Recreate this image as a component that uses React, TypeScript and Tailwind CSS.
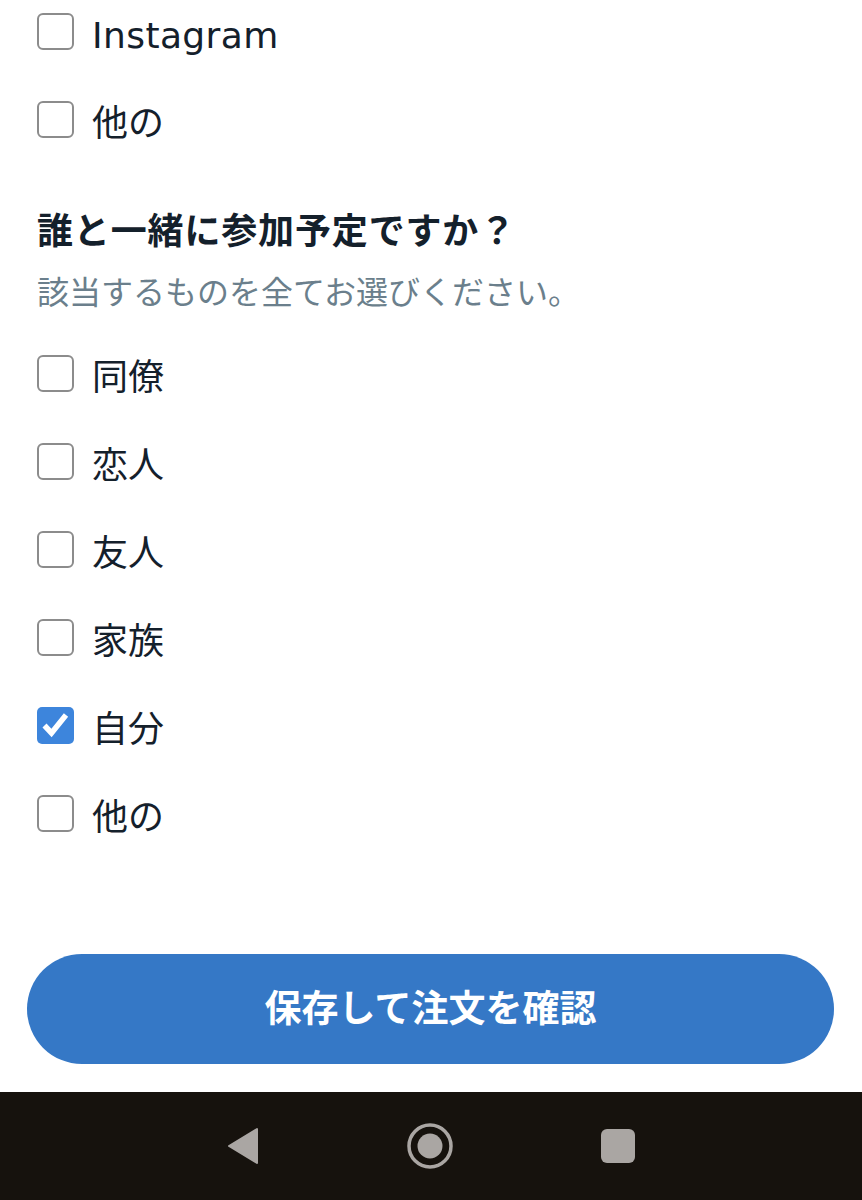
import React from 'react';

function Option({ label, checked, latin }: { label: string; checked?: boolean; latin?: boolean }) {
  return (
    <div className="h-[88px] flex items-center">
      {checked ? (
        <div className="w-[37px] h-[37px] mb-[8px] rounded-[5px] bg-[#3d85dc] flex items-center justify-center">
          <svg width="37" height="37" viewBox="0 0 37 37" fill="none" stroke="#fff" strokeWidth="5.5">
            <path d="M7.5 18.5l7 7.5L29 8" />
          </svg>
        </div>
      ) : (
        <div className="w-[37px] h-[37px] mb-[8px] rounded-[6px] border-[2.5px] border-[#8c8c8c] bg-white" />
      )}
      {latin ? (
        <span className="ml-[18px] mt-[2px] text-[#14202b] text-[36px] tracking-[0.4px] font-['DejaVu_Sans',sans-serif]">{label}</span>
      ) : (
        <span className="ml-[18px] text-[#14202b] text-[36px]">{label}</span>
      )}
    </div>
  );
}

export default function App() {
  return (
    <div className="w-[862px] h-[1200px] bg-white overflow-hidden flex flex-col font-['Inter','Noto_Sans_CJK_JP',sans-serif]">
      <div className="flex-1 px-[37px] mt-[-9px]">
        <Option label="Instagram" latin />
        <Option label="他の" />

        <h2 className="mt-[39px] text-[36px] tracking-[0.85px] leading-[50px] font-bold text-[#14202b]">誰と一緒に参加予定ですか？</h2>
        <p className="mt-[12px] text-[32px] leading-[50px] text-[#6b7f8c]">該当するものを全てお選びください。</p>

        <div className="mt-[15px]">
          <Option label="同僚" />
          <Option label="恋人" />
          <Option label="友人" />
          <Option label="家族" />
          <Option label="自分" checked />
          <Option label="他の" />
        </div>
      </div>

      <div className="pl-[27px] pr-[28px] mb-[28px]">
        <button className="w-full h-[110px] rounded-[55px] bg-[#3578c6] text-white text-[37px] font-semibold">保存して注文を確認</button>
      </div>

      <div className="h-[108px] bg-[#16120d] flex items-center justify-center gap-[148px]">
        <svg width="32" height="38" viewBox="0 0 32 38" fill="#aaa6a3" stroke="#aaa6a3" strokeWidth="2" strokeLinejoin="round">
          <path d="M30 2v34L2 19z" />
        </svg>
        <svg width="46" height="46" viewBox="0 0 46 46" fill="none">
          <circle cx="23" cy="23" r="21" stroke="#aaa6a3" strokeWidth="3.5" />
          <circle cx="23" cy="23" r="12.5" fill="#aaa6a3" />
        </svg>
        <div className="w-[34px] h-[34px] rounded-[6px] bg-[#aaa6a3]" />
      </div>
    </div>
  );
}
